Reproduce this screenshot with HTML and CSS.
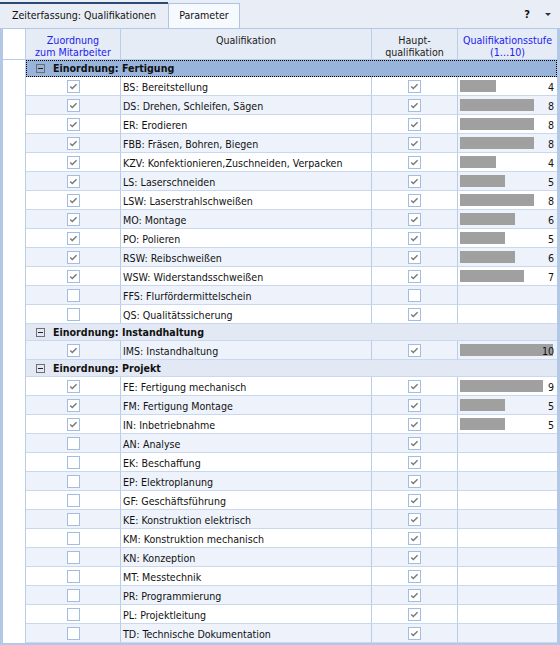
FILE: index.html
```html
<!DOCTYPE html>
<html lang="de">
<head>
<meta charset="utf-8">
<title>Zeiterfassung: Qualifikationen</title>
<link rel="stylesheet" href="styles.css">
</head>
<body>
<div class="tabbar">
  <div class="tab tab-active">Zeiterfassung: Qualifikationen</div>
  <div class="tab tab-other">Parameter</div>
  <div class="tools">
    <span class="help">?</span>
    <span class="drop"></span>
  </div>
</div>

<div class="grid">
  <div class="row head">
    <div class="hc ind"></div>
    <div class="hc blue">Zuordnung<br>zum Mitarbeiter</div>
    <div class="hc">Qualifikation</div>
    <div class="hc">Haupt-<br>qualifikation</div>
    <div class="hc blue last">Qualifikationsstufe<br>(1…10)</div>
  </div>

  <div class="row group focus"><div class="ind"></div><div class="gcell"><span class="exp"></span>Einordnung: Fertigung</div></div>

  <div class="row"><div class="ind"></div><div class="c cbc"><span class="cb on"></span></div><div class="c txt">BS: Bereitstellung</div><div class="c cbc"><span class="cb on"></span></div><div class="c lvl"><span class="bar" style="width:36px"></span><span class="num">4</span></div></div>
  <div class="row alt"><div class="ind"></div><div class="c cbc"><span class="cb on"></span></div><div class="c txt">DS: Drehen, Schleifen, Sägen</div><div class="c cbc"><span class="cb on"></span></div><div class="c lvl"><span class="bar" style="width:74px"></span><span class="num">8</span></div></div>
  <div class="row"><div class="ind"></div><div class="c cbc"><span class="cb on"></span></div><div class="c txt">ER: Erodieren</div><div class="c cbc"><span class="cb on"></span></div><div class="c lvl"><span class="bar" style="width:74px"></span><span class="num">8</span></div></div>
  <div class="row alt"><div class="ind"></div><div class="c cbc"><span class="cb on"></span></div><div class="c txt">FBB: Fräsen, Bohren, Biegen</div><div class="c cbc"><span class="cb on"></span></div><div class="c lvl"><span class="bar" style="width:74px"></span><span class="num">8</span></div></div>
  <div class="row"><div class="ind"></div><div class="c cbc"><span class="cb on"></span></div><div class="c txt">KZV: Konfektionieren,Zuschneiden, Verpacken</div><div class="c cbc"><span class="cb on"></span></div><div class="c lvl"><span class="bar" style="width:36px"></span><span class="num">4</span></div></div>
  <div class="row alt"><div class="ind"></div><div class="c cbc"><span class="cb on"></span></div><div class="c txt">LS: Laserschneiden</div><div class="c cbc"><span class="cb on"></span></div><div class="c lvl"><span class="bar" style="width:45px"></span><span class="num">5</span></div></div>
  <div class="row"><div class="ind"></div><div class="c cbc"><span class="cb on"></span></div><div class="c txt">LSW: Laserstrahlschweißen</div><div class="c cbc"><span class="cb on"></span></div><div class="c lvl"><span class="bar" style="width:74px"></span><span class="num">8</span></div></div>
  <div class="row alt"><div class="ind"></div><div class="c cbc"><span class="cb on"></span></div><div class="c txt">MO: Montage</div><div class="c cbc"><span class="cb on"></span></div><div class="c lvl"><span class="bar" style="width:55px"></span><span class="num">6</span></div></div>
  <div class="row"><div class="ind"></div><div class="c cbc"><span class="cb on"></span></div><div class="c txt">PO: Polieren</div><div class="c cbc"><span class="cb on"></span></div><div class="c lvl"><span class="bar" style="width:45px"></span><span class="num">5</span></div></div>
  <div class="row alt"><div class="ind"></div><div class="c cbc"><span class="cb on"></span></div><div class="c txt">RSW: Reibschweißen</div><div class="c cbc"><span class="cb on"></span></div><div class="c lvl"><span class="bar" style="width:55px"></span><span class="num">6</span></div></div>
  <div class="row"><div class="ind"></div><div class="c cbc"><span class="cb on"></span></div><div class="c txt">WSW: Widerstandsschweißen</div><div class="c cbc"><span class="cb on"></span></div><div class="c lvl"><span class="bar" style="width:64px"></span><span class="num">7</span></div></div>
  <div class="row alt"><div class="ind"></div><div class="c cbc"><span class="cb"></span></div><div class="c txt">FFS: Flurfördermittelschein</div><div class="c cbc"><span class="cb"></span></div><div class="c lvl"></div></div>
  <div class="row"><div class="ind"></div><div class="c cbc"><span class="cb"></span></div><div class="c txt">QS: Qualitätssicherung</div><div class="c cbc"><span class="cb on"></span></div><div class="c lvl"></div></div>

  <div class="row group"><div class="ind"></div><div class="gcell"><span class="exp"></span>Einordnung: Instandhaltung</div></div>

  <div class="row alt"><div class="ind"></div><div class="c cbc"><span class="cb on"></span></div><div class="c txt">IMS: Instandhaltung</div><div class="c cbc"><span class="cb on"></span></div><div class="c lvl"><span class="bar" style="width:93px"></span><span class="num">10</span></div></div>

  <div class="row group"><div class="ind"></div><div class="gcell"><span class="exp"></span>Einordnung: Projekt</div></div>

  <div class="row"><div class="ind"></div><div class="c cbc"><span class="cb on"></span></div><div class="c txt">FE: Fertigung mechanisch</div><div class="c cbc"><span class="cb on"></span></div><div class="c lvl"><span class="bar" style="width:83px"></span><span class="num">9</span></div></div>
  <div class="row alt"><div class="ind"></div><div class="c cbc"><span class="cb on"></span></div><div class="c txt">FM: Fertigung Montage</div><div class="c cbc"><span class="cb on"></span></div><div class="c lvl"><span class="bar" style="width:45px"></span><span class="num">5</span></div></div>
  <div class="row"><div class="ind"></div><div class="c cbc"><span class="cb on"></span></div><div class="c txt">IN: Inbetriebnahme</div><div class="c cbc"><span class="cb on"></span></div><div class="c lvl"><span class="bar" style="width:45px"></span><span class="num">5</span></div></div>
  <div class="row alt"><div class="ind"></div><div class="c cbc"><span class="cb"></span></div><div class="c txt">AN: Analyse</div><div class="c cbc"><span class="cb on"></span></div><div class="c lvl"></div></div>
  <div class="row"><div class="ind"></div><div class="c cbc"><span class="cb"></span></div><div class="c txt">EK: Beschaffung</div><div class="c cbc"><span class="cb on"></span></div><div class="c lvl"></div></div>
  <div class="row alt"><div class="ind"></div><div class="c cbc"><span class="cb"></span></div><div class="c txt">EP: Elektroplanung</div><div class="c cbc"><span class="cb on"></span></div><div class="c lvl"></div></div>
  <div class="row"><div class="ind"></div><div class="c cbc"><span class="cb"></span></div><div class="c txt">GF: Geschäftsführung</div><div class="c cbc"><span class="cb on"></span></div><div class="c lvl"></div></div>
  <div class="row alt"><div class="ind"></div><div class="c cbc"><span class="cb"></span></div><div class="c txt">KE: Konstruktion elektrisch</div><div class="c cbc"><span class="cb on"></span></div><div class="c lvl"></div></div>
  <div class="row"><div class="ind"></div><div class="c cbc"><span class="cb"></span></div><div class="c txt">KM: Konstruktion mechanisch</div><div class="c cbc"><span class="cb on"></span></div><div class="c lvl"></div></div>
  <div class="row alt"><div class="ind"></div><div class="c cbc"><span class="cb"></span></div><div class="c txt">KN: Konzeption</div><div class="c cbc"><span class="cb on"></span></div><div class="c lvl"></div></div>
  <div class="row"><div class="ind"></div><div class="c cbc"><span class="cb"></span></div><div class="c txt">MT: Messtechnik</div><div class="c cbc"><span class="cb on"></span></div><div class="c lvl"></div></div>
  <div class="row alt"><div class="ind"></div><div class="c cbc"><span class="cb"></span></div><div class="c txt">PR: Programmierung</div><div class="c cbc"><span class="cb on"></span></div><div class="c lvl"></div></div>
  <div class="row"><div class="ind"></div><div class="c cbc"><span class="cb"></span></div><div class="c txt">PL: Projektleitung</div><div class="c cbc"><span class="cb on"></span></div><div class="c lvl"></div></div>
  <div class="row alt"><div class="ind"></div><div class="c cbc"><span class="cb"></span></div><div class="c txt">TD: Technische Dokumentation</div><div class="c cbc"><span class="cb on"></span></div><div class="c lvl"></div></div>
</div>
</body>
</html>
```

FILE: styles.css
```css
html, body {
  margin: 0;
  padding: 0;
}
body {
  width: 560px;
  height: 645px;
  overflow: hidden;
  background: #ffffff;
  color: #111111;
  font-family: "DejaVu Sans Condensed", "DejaVu Sans", "Liberation Sans", sans-serif;
  font-size: 10.6px;
}

/* tab bar */
.tabbar {
  height: 28px;
  background: #e9eef6;
  display: flex;
  align-items: flex-end;
}
.tab {
  box-sizing: border-box;
  text-align: center;
  line-height: 23px;
  color: #111;
}
.tab-active {
  width: 168px;
  height: 26px;
  border-top: 2px solid #2c4a72;
  background: #e9eef6;
}
.tab-other {
  width: 72px;
  height: 25px;
  border: 1px solid #aec4e2;
  border-bottom: none;
  background: #f6f9fd;
}
.tools {
  margin-left: auto;
  height: 28px;
  display: flex;
  align-items: center;
  gap: 15px;
  padding-right: 9px;
}
.help {
  font-weight: bold;
  font-size: 11px;
  color: #111;
}
.drop {
  width: 0;
  height: 0;
  border-left: 3px solid transparent;
  border-right: 3px solid transparent;
  border-top: 3px solid #333;
  margin-top: 1px;
}

/* grid */
.grid {
  border: 3px solid #b3c8e6;
  border-top: 1px solid #b3c8e6;
}
.row {
  display: grid;
  grid-template-columns: 23px 95px 251px 86px 1fr;
  height: 19px;
}
.row.head {
  height: 31px;
}
.hc {
  box-sizing: border-box;
  background: #e6ecf6;
  border-right: 1px solid #b9cce8;
  border-bottom: 1px solid #b9cce8;
  text-align: center;
  padding-top: 5px;
  line-height: 12px;
  color: #1a1a1a;
  white-space: nowrap;
}
.hc.blue {
  color: #2020f0;
}
.hc.last {
  border-right: none;
}

.ind {
  box-sizing: border-box;
  background: #ffffff;
  border-right: 1px solid #b9cce8;
}
.c {
  box-sizing: border-box;
  background: #ffffff;
  border-right: 1px solid #b9cce8;
  border-bottom: 1px solid #c9d8ee;
  display: flex;
  align-items: center;
  min-width: 0;
}
.row.alt .c {
  background: #eef3fb;
}
.c.lvl {
  border-right: none;
  display: grid;
  align-items: center;
  padding: 0 3px 0 2px;
}
.txt {
  padding-left: 2px;
  padding-top: 1px;
  white-space: nowrap;
  overflow: hidden;
}
.cbc {
  justify-content: center;
}
.cb {
  box-sizing: border-box;
  width: 13px;
  height: 13px;
  border: 1px solid #a3bde0;
  background: #ffffff;
  display: block;
}
.cb.on::after {
  content: "";
  display: block;
  width: 11px;
  height: 11px;
  background: no-repeat center / 11px 11px url("data:image/svg+xml,%3Csvg xmlns='http://www.w3.org/2000/svg' viewBox='0 0 11 11'%3E%3Cpath d='M2.2 5.4 L4.3 7.5 L8.6 3.2' fill='none' stroke='%23787878' stroke-width='1.4'/%3E%3C/svg%3E");
}
.bar {
  grid-area: 1 / 1;
  justify-self: start;
  height: 12px;
  background: #a0a0a0;
}
.num {
  grid-area: 1 / 1;
  justify-self: end;
  line-height: 12px;
  padding-top: 1px;
  color: #111;
}

/* group rows */
.row.group {
  grid-template-columns: 23px 1fr;
  height: 17px;
}
.gcell {
  box-sizing: border-box;
  background: #e3e9f4;
  border-bottom: 1px solid #c9d8ee;
  display: flex;
  align-items: center;
  padding-left: 10px;
  font-weight: bold;
  color: #111;
  white-space: nowrap;
}
.row.group.focus .gcell {
  background: #98b4da;
  border-bottom: 1px dotted #000;
  outline: 1px dotted #000;
  outline-offset: -1px;
}
.exp {
  box-sizing: border-box;
  width: 9px;
  height: 9px;
  border: 1px solid #6f6f6f;
  margin-right: 8px;
  display: flex;
  align-items: center;
  justify-content: center;
}
.exp::before {
  content: "";
  width: 5px;
  height: 1px;
  background: #222;
}
```
